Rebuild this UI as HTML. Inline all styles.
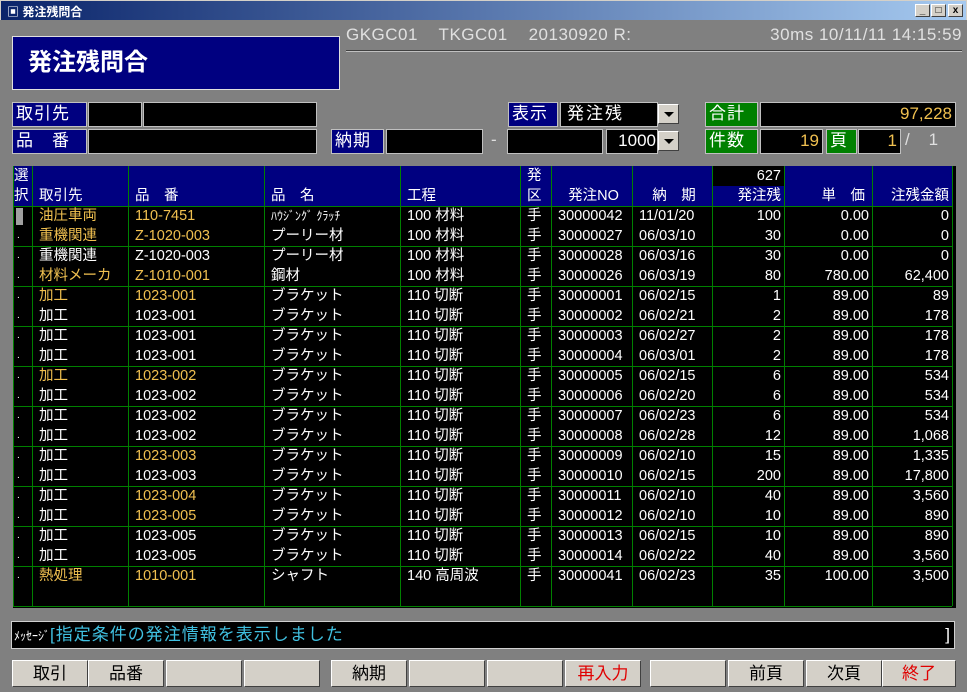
<!DOCTYPE html>
<html><head><meta charset="utf-8"><style>
*{margin:0;padding:0;box-sizing:border-box}
body{width:967px;height:692px;background:#808080;position:relative;overflow:hidden;font-family:"Liberation Sans","Noto Sans CJK JP",sans-serif;color:#fff}
.a{position:absolute}
.tb{left:0;top:0;width:967px;height:20px;background:linear-gradient(90deg,#0a246a,#a6caf0);border:1px solid #d4d0c8;border-bottom:none}
.tb span{position:absolute;left:6px;top:2px;font-size:12px;font-weight:bold}
.wb{top:3px;width:15px;height:13px;background:#d4d0c8;border:1px solid;border-color:#fff #404040 #404040 #fff;color:#000;font-size:10px;line-height:11px;text-align:center;font-weight:bold}
.lbl{background:#000080;border:1px solid #c0c0c0;font-size:17px;line-height:22px;color:#fff;padding-left:3px;letter-spacing:1px}
.grn{background:#008000;border:1px solid #c0c0c0;font-size:17px;line-height:22px;color:#fff;padding-left:3px;letter-spacing:1px}
.blk{background:#000;border:1px solid #c0c0c0;font-size:17px;line-height:22px;text-align:right;padding-right:3px}
.dd{width:21px;height:20px;background:#d4d0c8;border:1px solid;border-color:#fff #404040 #404040 #fff}
.dd:after{content:"";position:absolute;left:5px;top:7px;border:5px solid transparent;border-top:5px solid #000}
.btn{top:660px;height:27px;width:76px;background:#d4d0c8;border:1px solid;border-color:#fff #404040 #404040 #fff;color:#000;font-size:17px;line-height:25px;text-align:center}
.tw{position:absolute;left:13px;top:166px;width:943px;height:442px;background:#000;overflow:hidden}
table{border-collapse:collapse;table-layout:fixed;font-size:14.5px;width:939px;position:relative}
tr{height:20px}
td{height:20px;line-height:20px;padding:0 3px 0 6px;white-space:nowrap;overflow:hidden;border-left:1px solid #008000;border-right:1px solid #008000}
td.r{padding:0 3px 0 3px}
thead td{background:#000080;border-color:#008000}
tbody td:first-child{padding:0 0 0 3px;font-size:10px}
.r{text-align:right}
.y{color:#f0c050}
.hl{position:absolute;left:0;top:40px;width:939px;height:401px;background:repeating-linear-gradient(180deg,#008000 0,#008000 1px,transparent 1px,transparent 40px);pointer-events:none}
</style></head><body>
<div class="a tb"><span>▣ 発注残問合</span>
<div class="a wb" style="left:914px">_</div><div class="a wb" style="left:930px">□</div><div class="a wb" style="left:947px">x</div></div>
<div class="a" style="left:12px;top:36px;width:328px;height:54px;background:#000080;border:1px solid #e0e0e0;font-size:24px;font-weight:bold;line-height:52px;padding-left:15px">発注残問合</div>
<div class="a" style="left:346px;top:25px;font-size:17px;color:#e0e0e0;white-space:pre;letter-spacing:0.5px">GKGC01    TKGC01    20130920 R:</div>
<div class="a" style="left:700px;top:25px;width:262px;text-align:right;font-size:17px;color:#e0e0e0;white-space:pre;letter-spacing:0.5px">30ms 10/11/11 14:15:59</div>
<div class="a" style="left:346px;top:50px;width:616px;height:2px;border-top:1px solid #404040;border-bottom:1px solid #c0c0c0"></div>

<div class="a lbl" style="left:12px;top:102px;width:75px;height:25px">取引先</div>
<div class="a blk" style="left:88px;top:102px;width:54px;height:25px"></div>
<div class="a blk" style="left:143px;top:102px;width:174px;height:25px"></div>
<div class="a lbl" style="left:12px;top:129px;width:75px;height:25px;white-space:pre">品　番</div>
<div class="a blk" style="left:88px;top:129px;width:229px;height:25px"></div>
<div class="a lbl" style="left:331px;top:129px;width:53px;height:25px">納期</div>
<div class="a blk" style="left:386px;top:129px;width:97px;height:25px"></div>
<div class="a" style="left:491px;top:130px;font-size:17px;color:#e0e0e0">-</div>
<div class="a blk" style="left:507px;top:129px;width:96px;height:25px"></div>
<div class="a blk" style="left:606px;top:129px;width:52px;height:25px;padding-right:1px">1000</div>
<div class="a dd" style="left:658px;top:131px"></div>
<div class="a lbl" style="left:508px;top:102px;width:50px;height:25px">表示</div>
<div class="a blk" style="left:560px;top:102px;width:98px;height:25px;text-align:left;padding-left:6px;letter-spacing:2px">発注残</div>
<div class="a dd" style="left:658px;top:104px"></div>
<div class="a grn" style="left:705px;top:102px;width:53px;height:25px">合計</div>
<div class="a blk y" style="left:760px;top:102px;width:196px;height:25px">97,228</div>
<div class="a grn" style="left:705px;top:129px;width:53px;height:25px">件数</div>
<div class="a blk y" style="left:760px;top:129px;width:63px;height:25px">19</div>
<div class="a grn" style="left:826px;top:129px;width:31px;height:25px">頁</div>
<div class="a blk y" style="left:858px;top:129px;width:43px;height:25px">1</div>
<div class="a" style="left:905px;top:130px;font-size:17px;color:#e0e0e0;white-space:pre">/    1</div>

<div class="tw">
<table>
<colgroup><col style="width:19px"><col style="width:96px"><col style="width:136px"><col style="width:136px"><col style="width:120px"><col style="width:31px"><col style="width:81px"><col style="width:80px"><col style="width:72px"><col style="width:88px"><col style="width:80px"></colgroup>
<thead>
<tr><td style="padding:0">選</td><td></td><td></td><td></td><td></td><td>発</td><td></td><td></td><td class="r" style="background:#000">627</td><td></td><td></td></tr>
<tr><td style="padding:0">択</td><td>取引先</td><td style="white-space:pre">品　番</td><td style="white-space:pre">品　名</td><td>工程</td><td>区</td><td style="text-align:center">発注NO</td><td style="text-align:center;white-space:pre">納　期</td><td class="r">発注残</td><td class="r" style="white-space:pre">単　価 </td><td class="r">注残金額</td></tr>
</thead>
<tbody>
<tr><td style="padding:0 0 0 2px"><div style="width:7px;height:17px;background:#a0a0a0;margin-top:1px"></div></td><td class="y">油圧車両</td><td class="y">110-7451</td><td style="font-size:12px">ﾊｳｼﾞﾝｸﾞ ｸﾗｯﾁ</td><td>100 材料</td><td>手</td><td>30000042</td><td>11/01/20</td><td class="r">100</td><td class="r">0.00</td><td class="r">0</td></tr>
<tr><td>.</td><td class="y">重機関連</td><td class="y">Z-1020-003</td><td>プーリー材</td><td>100 材料</td><td>手</td><td>30000027</td><td>06/03/10</td><td class="r">30</td><td class="r">0.00</td><td class="r">0</td></tr>
<tr><td>.</td><td>重機関連</td><td>Z-1020-003</td><td>プーリー材</td><td>100 材料</td><td>手</td><td>30000028</td><td>06/03/16</td><td class="r">30</td><td class="r">0.00</td><td class="r">0</td></tr>
<tr><td>.</td><td class="y">材料メーカ</td><td class="y">Z-1010-001</td><td>鋼材</td><td>100 材料</td><td>手</td><td>30000026</td><td>06/03/19</td><td class="r">80</td><td class="r">780.00</td><td class="r">62,400</td></tr>
<tr><td>.</td><td class="y">加工</td><td class="y">1023-001</td><td>ブラケット</td><td>110 切断</td><td>手</td><td>30000001</td><td>06/02/15</td><td class="r">1</td><td class="r">89.00</td><td class="r">89</td></tr>
<tr><td>.</td><td>加工</td><td>1023-001</td><td>ブラケット</td><td>110 切断</td><td>手</td><td>30000002</td><td>06/02/21</td><td class="r">2</td><td class="r">89.00</td><td class="r">178</td></tr>
<tr><td>.</td><td>加工</td><td>1023-001</td><td>ブラケット</td><td>110 切断</td><td>手</td><td>30000003</td><td>06/02/27</td><td class="r">2</td><td class="r">89.00</td><td class="r">178</td></tr>
<tr><td>.</td><td>加工</td><td>1023-001</td><td>ブラケット</td><td>110 切断</td><td>手</td><td>30000004</td><td>06/03/01</td><td class="r">2</td><td class="r">89.00</td><td class="r">178</td></tr>
<tr><td>.</td><td class="y">加工</td><td class="y">1023-002</td><td>ブラケット</td><td>110 切断</td><td>手</td><td>30000005</td><td>06/02/15</td><td class="r">6</td><td class="r">89.00</td><td class="r">534</td></tr>
<tr><td>.</td><td>加工</td><td>1023-002</td><td>ブラケット</td><td>110 切断</td><td>手</td><td>30000006</td><td>06/02/20</td><td class="r">6</td><td class="r">89.00</td><td class="r">534</td></tr>
<tr><td>.</td><td>加工</td><td>1023-002</td><td>ブラケット</td><td>110 切断</td><td>手</td><td>30000007</td><td>06/02/23</td><td class="r">6</td><td class="r">89.00</td><td class="r">534</td></tr>
<tr><td>.</td><td>加工</td><td>1023-002</td><td>ブラケット</td><td>110 切断</td><td>手</td><td>30000008</td><td>06/02/28</td><td class="r">12</td><td class="r">89.00</td><td class="r">1,068</td></tr>
<tr><td>.</td><td>加工</td><td class="y">1023-003</td><td>ブラケット</td><td>110 切断</td><td>手</td><td>30000009</td><td>06/02/10</td><td class="r">15</td><td class="r">89.00</td><td class="r">1,335</td></tr>
<tr><td>.</td><td>加工</td><td>1023-003</td><td>ブラケット</td><td>110 切断</td><td>手</td><td>30000010</td><td>06/02/15</td><td class="r">200</td><td class="r">89.00</td><td class="r">17,800</td></tr>
<tr><td>.</td><td>加工</td><td class="y">1023-004</td><td>ブラケット</td><td>110 切断</td><td>手</td><td>30000011</td><td>06/02/10</td><td class="r">40</td><td class="r">89.00</td><td class="r">3,560</td></tr>
<tr><td>.</td><td>加工</td><td class="y">1023-005</td><td>ブラケット</td><td>110 切断</td><td>手</td><td>30000012</td><td>06/02/10</td><td class="r">10</td><td class="r">89.00</td><td class="r">890</td></tr>
<tr><td>.</td><td>加工</td><td>1023-005</td><td>ブラケット</td><td>110 切断</td><td>手</td><td>30000013</td><td>06/02/15</td><td class="r">10</td><td class="r">89.00</td><td class="r">890</td></tr>
<tr><td>.</td><td>加工</td><td>1023-005</td><td>ブラケット</td><td>110 切断</td><td>手</td><td>30000014</td><td>06/02/22</td><td class="r">40</td><td class="r">89.00</td><td class="r">3,560</td></tr>
<tr><td>.</td><td class="y">熱処理</td><td class="y">1010-001</td><td>シャフト</td><td>140 高周波</td><td>手</td><td>30000041</td><td>06/02/23</td><td class="r">35</td><td class="r">100.00</td><td class="r">3,500</td></tr>
<tr><td></td><td></td><td></td><td></td><td></td><td></td><td></td><td></td><td></td><td></td><td></td></tr>
</tbody>
</table>
<div class="hl"></div>
</div>

<div class="a" style="left:11px;top:621px;width:944px;height:28px;background:#000;border:1px solid #d0d0d0;font-size:17px;line-height:26px;padding-left:2px"><span style="font-size:12px">ﾒｯｾｰｼﾞ</span><span style="color:#40c0e0;letter-spacing:1px">[指定条件の発注情報を表示しました</span><span style="position:absolute;right:4px">]</span></div>

<div class="a btn" style="left:12px">取引</div>
<div class="a btn" style="left:88px">品番</div>
<div class="a btn" style="left:166px"></div>
<div class="a btn" style="left:244px"></div>
<div class="a btn" style="left:331px">納期</div>
<div class="a btn" style="left:409px"></div>
<div class="a btn" style="left:487px"></div>
<div class="a btn" style="left:565px;color:#e00000">再入力</div>
<div class="a btn" style="left:650px"></div>
<div class="a btn" style="left:728px">前頁</div>
<div class="a btn" style="left:806px">次頁</div>
<div class="a btn" style="left:882px;width:74px;color:#e00000">終了</div>
</body></html>
